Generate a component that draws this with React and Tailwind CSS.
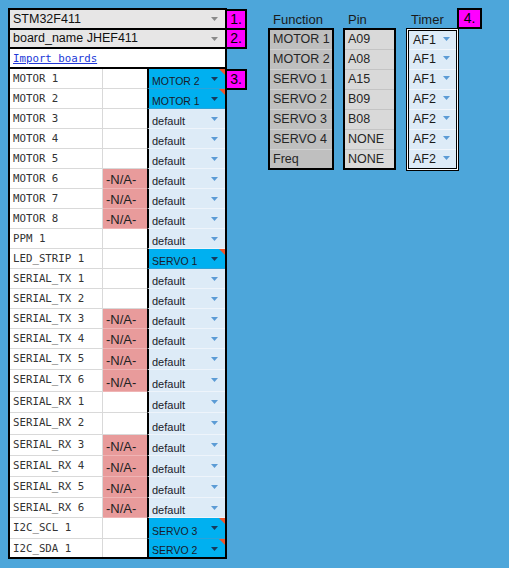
import React from 'react';

const sans = "font-['Liberation_Sans',Arial,sans-serif]";
const mono = "font-['DejaVu_Sans_Mono','Liberation_Mono',monospace]";

const rows = [
  { label: 'MOTOR 1', value: 'MOTOR 2', hi: true, h: 'h-[20px]' },
  { label: 'MOTOR 2', value: 'MOTOR 1', hi: true, h: 'h-[20px]' },
  { label: 'MOTOR 3', value: 'default', h: 'h-[20px]' },
  { label: 'MOTOR 4', value: 'default', h: 'h-[20px]' },
  { label: 'MOTOR 5', value: 'default', h: 'h-[20px]' },
  { label: 'MOTOR 6', na: true, value: 'default', h: 'h-[20px]' },
  { label: 'MOTOR 7', na: true, value: 'default', h: 'h-[20px]' },
  { label: 'MOTOR 8', na: true, value: 'default', h: 'h-[20px]' },
  { label: 'PPM 1', value: 'default', h: 'h-[20px]' },
  { label: 'LED_STRIP 1', value: 'SERVO 1', hi: true, h: 'h-[20px]' },
  { label: 'SERIAL_TX 1', value: 'default', h: 'h-[20px]' },
  { label: 'SERIAL_TX 2', value: 'default', h: 'h-[20px]' },
  { label: 'SERIAL_TX 3', na: true, value: 'default', h: 'h-[20px]' },
  { label: 'SERIAL_TX 4', na: true, value: 'default', h: 'h-[20px]' },
  { label: 'SERIAL_TX 5', na: true, value: 'default', h: 'h-[21px]' },
  { label: 'SERIAL_TX 6', na: true, value: 'default', h: 'h-[22px]' },
  { label: 'SERIAL_RX 1', value: 'default', h: 'h-[21px]' },
  { label: 'SERIAL_RX 2', value: 'default', h: 'h-[22px]' },
  { label: 'SERIAL_RX 3', na: true, value: 'default', h: 'h-[21px]' },
  { label: 'SERIAL_RX 4', na: true, value: 'default', h: 'h-[21px]' },
  { label: 'SERIAL_RX 5', na: true, value: 'default', h: 'h-[21px]' },
  { label: 'SERIAL_RX 6', na: true, value: 'default', h: 'h-[20px]' },
  { label: 'I2C_SCL 1', value: 'SERVO 3', hi: true, h: 'h-[21px]' },
  { label: 'I2C_SDA 1', value: 'SERVO 2', hi: true, h: 'h-[18px]' },
];

const functions = ['MOTOR 1', 'MOTOR 2', 'SERVO 1', 'SERVO 2', 'SERVO 3', 'SERVO 4', 'Freq'];
const pins = ['A09', 'A08', 'A15', 'B09', 'B08', 'NONE', 'NONE'];
const timers = ['AF1', 'AF1', 'AF1', 'AF2', 'AF2', 'AF2', 'AF2'];
const rightHeights = ['h-[20px]', 'h-[20px]', 'h-[20px]', 'h-[20px]', 'h-[20px]', 'h-[20px]', 'h-[18px]'];
const timerHeights = ['h-[19px]', 'h-[20px]', 'h-[20px]', 'h-[20px]', 'h-[20px]', 'h-[20px]', 'h-[18px]'];

function Arrow({ color, className = '' }) {
  return (
    <svg width="7" height="4" viewBox="0 0 7 4" className={`shrink-0 ${className}`}>
      <polygon points="0,0 7,0 3.5,4" fill={color} />
    </svg>
  );
}

function Badge({ children, className }) {
  return (
    <div className={`absolute flex items-center justify-center border-2 border-black bg-[#ff00ff] text-[14px] text-black ${sans} ${className}`}>
      {children}
    </div>
  );
}

function PinRow({ row, last }) {
  return (
    <div className={`flex ${row.h}`}>
      <div className={`w-[93px] border-r border-[#d9d9d9] pl-[3px] pt-[2px] text-[10.75px] text-[#333] ${mono} ${last ? '' : 'border-b'}`}>
        {row.label}
      </div>
      {row.na ? (
        <div className={`flex w-[44px] items-end bg-[#e89b9b] pb-[2px] pl-[3px] text-[13px] leading-[13px] text-[#222] ${sans} ${last ? '' : 'border-b border-[#efb4b4]'}`}>
          -N/A-
        </div>
      ) : (
        <div className={`w-[44px] border-[#d9d9d9] ${last ? '' : 'border-b'}`} />
      )}
      <div
        className={`relative flex w-[78px] items-end border-l-2 border-l-black pl-[3px] ${sans} ${
          row.hi ? 'bg-[#00b0f0] border-b-[#2aa3da]' : 'bg-[#ddebf7] border-b-[#eef4fb]'
        } ${last ? '' : 'border-b'}`}
      >
        <span className={`flex-1 pb-[1px] leading-[12px] text-[#1a1a2a] ${row.hi ? 'text-[10.5px]' : 'text-[11px]'}`}>
          {row.value}
        </span>
        <Arrow color={row.hi ? '#163a5c' : '#5b9bd5'} className="mb-auto mr-[7px] mt-[8px]" />
        {row.hi && (
          <div className="absolute right-0 top-0 h-0 w-0 border-l-[6px] border-t-[6px] border-l-transparent border-t-[#f0552a]" />
        )}
      </div>
    </div>
  );
}

export default function App() {
  return (
    <div className="flex min-h-[568px] w-[509px] items-start bg-[#4da6da]">
      {/* Pin mapping panel */}
      <div className="relative ml-[8px] mt-[8px] w-[219px] border-2 border-black bg-white">
        <div className={`flex h-[20px] items-center border-b-2 border-black bg-[#e7e6e6] pl-[3px] pr-[7px] text-[12.5px] text-[#111] ${sans}`}>
          <span className="flex-1">STM32F411</span>
          <Arrow color="#8a8a8a" />
        </div>
        <div className={`flex h-[19px] items-center border-b-2 border-black bg-[#e7e6e6] pl-[3px] pr-[7px] text-[12.5px] text-[#111] ${sans}`}>
          <span className="flex-1">board_name JHEF411</span>
          <Arrow color="#8a8a8a" />
        </div>
        <div className={`h-[20px] border-b-2 border-black pl-[3px] pt-[2px] text-[10.75px] ${mono}`}>
          <span className="text-[#2038d8] underline">Import boards</span>
        </div>
        {rows.map((row, i) => (
          <PinRow key={row.label} row={row} last={i === rows.length - 1} />
        ))}

        <Badge className="left-[215px] top-[-1px] h-[21px] w-[22px]">1.</Badge>
        <Badge className="left-[215px] top-[18px] h-[21px] w-[22px]">2.</Badge>
        <Badge className="left-[215px] top-[59px] h-[21px] w-[22px]">3.</Badge>
      </div>

      {/* Timer table */}
      <div className={`ml-[41px] mt-[8px] flex ${sans}`}>
        <div className="flex flex-col">
          <div className="flex h-[20px] items-end pb-[1px] pl-[5px] text-[13px] leading-[15px] text-[#1a1a1a]">Function</div>
          <div className="w-[66px] border-2 border-black bg-[#bfbfbf]">
            {functions.map((f, i) => (
              <div key={f} className={`flex items-center pl-[3px] text-[12.5px] text-[#262626] ${rightHeights[i]} ${i < 6 ? 'border-b border-[#d2d2d2]' : ''}`}>
                {f}
              </div>
            ))}
          </div>
        </div>

        <div className="ml-[9px] flex flex-col">
          <div className="flex h-[20px] items-end pb-[1px] pl-[5px] text-[13px] leading-[15px] text-[#1a1a1a]">Pin</div>
          <div className="w-[53px] border-2 border-black bg-[#d9d9d9]">
            {pins.map((p, i) => (
              <div key={i} className={`flex items-center pl-[3px] text-[12.5px] text-[#262626] ${rightHeights[i]} ${i < 6 ? 'border-b border-[#c4c4c4]' : ''}`}>
                {p}
              </div>
            ))}
          </div>
        </div>

        <div className="relative ml-[10px] flex flex-col">
          <div className="flex h-[20px] items-end pb-[1px] pl-[5px] text-[13px] leading-[15px] text-[#1a1a1a]">Timer</div>
          <div className="w-[53px] border-[3px] border-double border-black bg-white">
            {timers.map((t, i) => (
              <div key={i} className={`flex items-center bg-[#ddebf7] pl-[4px] text-[12.5px] text-[#1a1a1a] ${timerHeights[i]} ${i < 6 ? 'border-b border-[#f1f6fc]' : ''}`}>
                <span className="flex-1">{t}</span>
                <Arrow color="#5b9bd5" className="mb-[3px] mr-[6px]" />
              </div>
            ))}
          </div>
          <Badge className="left-[51px] top-0 h-[21px] w-[25px]">4.</Badge>
        </div>
      </div>
    </div>
  );
}
